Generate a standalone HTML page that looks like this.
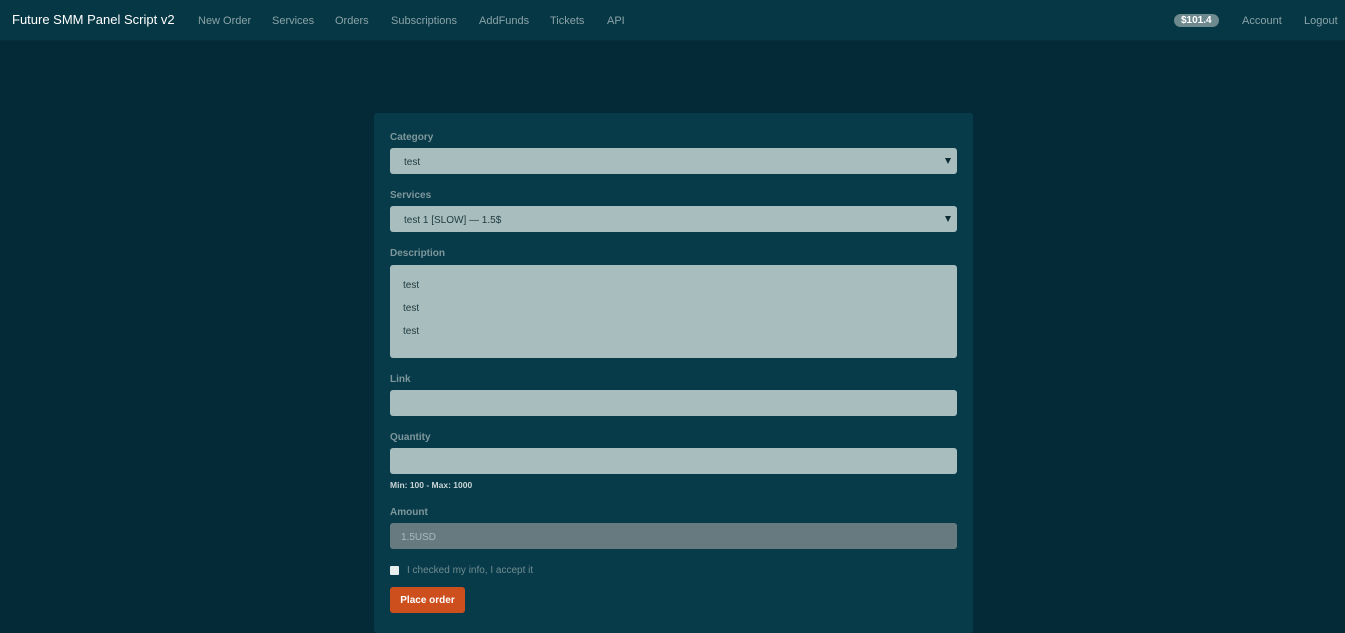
<!DOCTYPE html>
<html><head><style>
*{box-sizing:border-box;margin:0;padding:0}
body{width:1345px;height:627px;overflow:hidden;background:#032a36;font-family:"Liberation Sans",sans-serif;position:relative}
.nav{position:absolute;left:0;top:0;width:1345px;height:41px;background:#063744;border-bottom:1px solid #042e3a}
.nav span{position:absolute;top:15px;font-size:11px;color:#8aa3a8}
.brand{left:12px!important;top:12px!important;font-size:13px!important;color:#fff!important}
.badge{background:#6f8a8f;color:#fff!important;border-radius:8px;padding:1px 7px;font-weight:bold;font-size:10px!important;top:14px!important}
.panel{position:absolute;left:374px;top:113px;width:599px;height:520px;background:#083b49;border-radius:3px}
.lbl{position:absolute;left:16px;font-size:10px;font-weight:bold;color:#7e979c}
.in{position:absolute;left:16px;width:567px;height:26px;background:#a8bdbd;border-radius:3px;font-size:10px;color:#1d3a40;padding:9px 14px 0}
.arr{position:absolute;right:6px;top:10px;width:0;height:0;border-left:3.5px solid transparent;border-right:3.5px solid transparent;border-top:6px solid #0d2b33}
</style></head><body>
<div class="nav">
<span class="brand">Future SMM Panel Script v2</span>
<span style="left:198px">New Order</span>
<span style="left:272px">Services</span>
<span style="left:335px">Orders</span>
<span style="left:391px">Subscriptions</span>
<span style="left:479px">AddFunds</span>
<span style="left:550px">Tickets</span>
<span style="left:607px">API</span>
<span class="badge" style="left:1174px">$101.4</span>
<span style="left:1242px">Account</span>
<span style="left:1304px">Logout</span>
</div>
<div class="panel">
<div class="lbl" style="top:19px">Category</div>
<div class="in" style="top:35px">test<div class="arr"></div></div>
<div class="lbl" style="top:77px">Services</div>
<div class="in" style="top:93px">test 1 [SLOW] — 1.5$<div class="arr"></div></div>
<div class="lbl" style="top:135px">Description</div>
<div class="in" style="top:152px;height:93px;padding:9px 13px;line-height:23px">test<br>test<br>test</div>
<div class="lbl" style="top:261px">Link</div>
<div class="in" style="top:277px"></div>
<div class="lbl" style="top:319px">Quantity</div>
<div class="in" style="top:335px"></div>
<div style="position:absolute;left:16px;top:367px;font-size:8.5px;font-weight:bold;color:#c8d4d6">Min: 100 - Max: 1000</div>
<div class="lbl" style="top:394px">Amount</div>
<div class="in" style="top:410px;background:#677a80;color:#a9babd;padding-left:11px">1.5USD</div>
<div style="position:absolute;left:16px;top:453px;width:9px;height:9px;background:#e8eded;border-radius:1px"></div>
<div style="position:absolute;left:33px;top:452px;font-size:10px;color:#6f8b90">I checked my info, I accept it</div>
<div style="position:absolute;left:16px;top:474px;width:75px;height:26px;background:#cd4f1e;border-radius:3px;color:#fff;font-size:10px;font-weight:bold;text-align:center;line-height:27px">Place order</div>
</div>
</body></html>
